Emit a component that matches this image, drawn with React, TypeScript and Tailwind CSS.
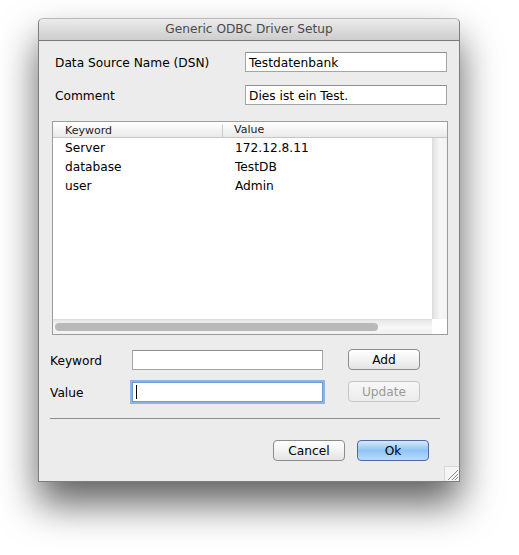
import React from 'react'

const font = { fontFamily: '"DejaVu Sans", "Liberation Sans", sans-serif' }

type rowData = { keyword: string, value: string }

const rows: rowData[] = [
    { keyword: 'Server', value: '172.12.8.11' },
    { keyword: 'database', value: 'TestDB' },
    { keyword: 'user', value: 'Admin' },
]

const TextBox = ({ className, value, focused }: { className?: string, value?: string, focused?: boolean }) => (
    <div className={`${className} h-[20px] bg-white border ${focused ? 'border-[#6f9bd1] shadow-[0_0_0_2px_#8db4e3]' : 'border-[#a5a5a5] border-t-[#8e8e8e]'} flex items-center px-[3px] pt-[2px] text-[12.2px] text-black`}>
        {value}
        {focused && <span className="w-px h-[14px] bg-black -mt-[2px]" />}
    </div>
)

const MacButton = ({ children, disabled, primary }: { children: React.ReactNode, disabled?: boolean, primary?: boolean }) => {
    let look = 'bg-gradient-to-b from-white via-[#f3f3f3] to-[#e4e4e4] border-[#8c8c8c] text-black'
    if (disabled) look = 'bg-gradient-to-b from-[#f7f7f7] to-[#ececec] border-[#c4c4c4] text-[#9a9a9a]'
    if (primary) look = 'bg-gradient-to-b from-[#d6e9fc] via-[#8ec4f3] to-[#b9dcfa] border-[#4f6aa3] text-black'
    return (
        <button className={`w-[72px] h-[21px] rounded-[4px] border text-[12.2px] leading-none pt-[1px] flex items-center justify-center ${look}`}>
            {children}
        </button>
    )
}

export default function App() {
    return (
        <div className="w-[519px] h-[555px] bg-white pt-[18px] pl-[38px]" style={font}>
            <div className="w-[422px] h-[464px] bg-[#ececec] border border-[#7d7d7d] border-t-[#b8b8b8] rounded-t-[5px] shadow-[0_22px_38px_rgba(0,0,0,0.62)] flex flex-col relative">
                <div className="h-[22px] rounded-t-[5px] bg-gradient-to-b from-[#ececec] to-[#cdcdcd] border-b border-[#7a7a7a] flex items-center justify-center text-[12.2px] text-[#4a4a4a]">
                    Generic ODBC Driver Setup
                </div>

                <div className="flex flex-col pt-[11px] pr-[12px]">
                    <div className="flex items-center h-[20px]">
                        <span className="w-[206px] pl-[16px] pt-[3px] text-[12.2px] text-black">Data Source Name (DSN)</span>
                        <TextBox className="w-[202px]" value="Testdatenbank" />
                    </div>
                    <div className="flex items-center h-[20px] mt-[13px]">
                        <span className="w-[206px] pl-[16px] pt-[3px] text-[12.2px] text-black">Comment</span>
                        <TextBox className="w-[202px]" value="Dies ist ein Test." />
                    </div>
                </div>

                <div className="ml-[13px] mt-[16px] w-[396px] h-[214px] border border-[#9c9c9c] bg-white flex flex-col">
                    <div className="h-[16px] flex items-center pt-[2px] bg-gradient-to-b from-white to-[#e9e9e9] border-b border-[#c6c6c6] text-[11px] text-[#222]">
                        <span className="w-[170px] pl-[12px] border-r border-[#c9c9c9] leading-[12px]">Keyword</span>
                        <span className="pl-[11px]">Value</span>
                    </div>
                    <div className="flex flex-1">
                        <div className="flex-1 flex flex-col pt-[1px]">
                            {rows.map((r) => (
                                <div key={r.keyword} className="h-[19px] flex items-center text-[12.2px] text-black">
                                    <span className="w-[170px] pl-[12px]">{r.keyword}</span>
                                    <span className="pl-[12px]">{r.value}</span>
                                </div>
                            ))}
                        </div>
                        <div className="w-[15px] bg-gradient-to-r from-[#e2e2e2] via-[#f7f7f7] to-[#f2f2f2] border-l border-[#dcdcdc]" />
                    </div>
                    <div className="h-[15px] flex">
                        <div className="flex-1 bg-gradient-to-b from-[#e6e6e6] via-[#f7f7f7] to-[#f1f1f1] border-t border-[#dcdcdc] flex items-center pl-[2px]">
                            <div className="w-[323px] h-[8px] rounded-full bg-[#b9b9b9]" />
                        </div>
                        <div className="w-[15px] bg-white" />
                    </div>
                </div>

                <div className="flex flex-col pl-[11px] mt-[14px]">
                    <div className="flex items-center h-[21px]">
                        <span className="w-[82px] pt-[3px] text-[12.2px] text-black">Keyword</span>
                        <TextBox className="w-[191px]" />
                        <div className="ml-[25px]"><MacButton>Add</MacButton></div>
                    </div>
                    <div className="flex items-center h-[21px] mt-[11px]">
                        <span className="w-[82px] pt-[4px] text-[12.2px] text-black">Value</span>
                        <TextBox className="w-[191px]" focused />
                        <div className="ml-[25px]"><MacButton disabled>Update</MacButton></div>
                    </div>
                </div>

                <div className="ml-[11px] mt-[16px] w-[390px] h-px bg-[#8e8e8e]" />

                <div className="flex justify-end gap-[12px] pr-[30px] mt-[21px]">
                    <MacButton>Cancel</MacButton>
                    <MacButton primary>Ok</MacButton>
                </div>

                <svg className="absolute right-0 bottom-0" width="15" height="15" viewBox="0 0 15 15">
                    <rect x="0" y="0" width="15" height="15" fill="#f4f4f4" />
                    <line x1="0.5" y1="0" x2="0.5" y2="15" stroke="#d8d8d8" />
                    <line x1="0" y1="0.5" x2="15" y2="0.5" stroke="#d8d8d8" />
                    <line x1="4" y1="14" x2="14" y2="4" stroke="#8a8a8a" />
                    <line x1="8" y1="14" x2="14" y2="8" stroke="#8a8a8a" />
                    <line x1="11" y1="14" x2="14" y2="11" stroke="#8a8a8a" />
                </svg>
            </div>
        </div>
    )
}
